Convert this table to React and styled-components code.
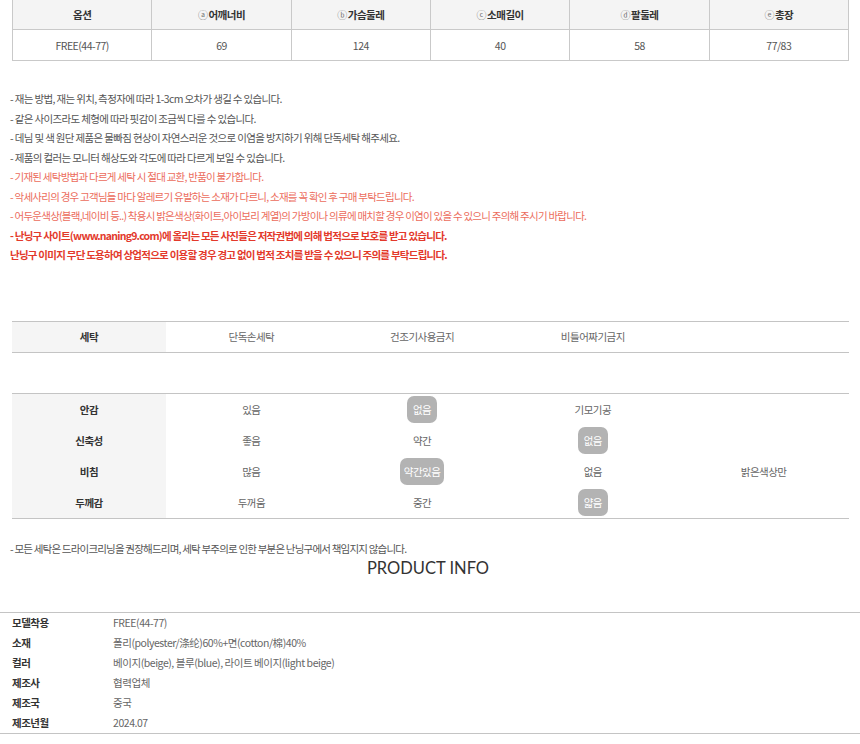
import React from 'react';
import styled, { createGlobalStyle } from 'styled-components';

const GlobalStyle = createGlobalStyle`
  body {
    margin: 0;
    background: #fff;
    font-family: "Noto Sans CJK KR", "Noto Sans CJK SC", sans-serif;
    font-size: 10.5px;
    letter-spacing: -0.5px;
    color: #555;
  }
`;

const sizeHead = [
  { mark: '', label: '옵션' },
  { mark: 'ⓐ', label: '어깨너비' },
  { mark: 'ⓑ', label: '가슴둘레' },
  { mark: 'ⓒ', label: '소매길이' },
  { mark: 'ⓓ', label: '팔둘레' },
  { mark: 'ⓔ', label: '총장' },
];
const sizeRow = ['FREE(44-77)', '69', '124', '40', '58', '77/83'];

const notes = [
  { tone: 'gray', text: '- 재는 방법, 재는 위치, 측정자에 따라 1-3cm 오차가 생길 수 있습니다.' },
  { tone: 'gray', text: '- 같은 사이즈라도 체형에 따라 핏감이 조금씩 다를 수 있습니다.' },
  { tone: 'gray', text: '- 데님 및 색 원단 제품은 물빠짐 현상이 자연스러운 것으로 이염을 방지하기 위해 단독세탁 해주세요.' },
  { tone: 'gray', text: '- 제품의 컬러는 모니터 해상도와 각도에 따라 다르게 보일 수 있습니다.' },
  { tone: 'light', text: '- 기재된 세탁방법과 다르게 세탁 시 절대 교환, 반품이 불가합니다.' },
  { tone: 'light', text: '- 악세사리의 경우 고객님들 마다 알레르기 유발하는 소재가 다르니, 소재를 꼭 확인 후 구매 부탁드립니다.' },
  { tone: 'light', text: '- 어두운색상(블랙,네이비 등..) 착용시 밝은색상(화이트,아이보리 계열)의 가방이나 의류에 매치할 경우 이염이 있을 수 있으니 주의해 주시기 바랍니다.' },
  { tone: 'strong', text: '- 난닝구 사이트(www.naning9.com)에 올리는 모든 사진들은 저작권법에 의해 법적으로 보호를 받고 있습니다.' },
  { tone: 'strong', text: '난닝구 이미지 무단 도용하여 상업적으로 이용할 경우 경고 없이 법적 조치를 받을 수 있으니 주의를 부탁드립니다.' },
];

const feel = [
  { label: '안감', values: ['있음', '없음', '기모기공', ''], on: 1 },
  { label: '신축성', values: ['좋음', '약간', '없음', ''], on: 2 },
  { label: '비침', values: ['많음', '약간있음', '없음', '밝은색상만'], on: 1 },
  { label: '두께감', values: ['두꺼움', '중간', '얇음', ''], on: 2 },
];

const info = [
  ['모델착용', 'FREE(44-77)'],
  ['소재', '폴리(polyester/涤纶)60%+면(cotton/棉)40%'],
  ['컬러', '베이지(beige), 블루(blue), 라이트 베이지(light beige)'],
  ['제조사', '협력업체'],
  ['제조국', '중국'],
  ['제조년월', '2024.07'],
];

const toneColor = { gray: '#555', light: '#ec6c5c', strong: '#e3392b' };
const toneSpacing = { gray: '-0.65px', light: '-0.75px', strong: '-0.75px' };

const Page = styled.div`
  width: 860px;
  display: flex;
  flex-direction: column;
`;

const SizeTable = styled.div`
  margin: 0 11px 0 12px;
  display: grid;
  grid-template-columns: repeat(6, 1fr);
  border-left: 1px solid #c9c9c9;
`;

const SizeCell = styled.div`
  height: ${({ head }) => (head ? '29px' : '30px')};
  display: flex;
  align-items: center;
  justify-content: center;
  background: ${({ head }) => (head ? '#f4f4f4' : '#fff')};
  border-right: 1px solid #c9c9c9;
  border-bottom: 1px solid #c9c9c9;
  color: ${({ head }) => (head ? '#333' : '#555')};
  font-weight: ${({ head }) => (head ? 700 : 400)};
`;

const Mark = styled.span`
  font-size: 10px;
  font-weight: 400;
  color: #777;
  margin-right: 1px;
`;

const Notes = styled.ul`
  list-style: none;
  margin: 28px 0 0;
  padding: 0 0 0 10px;
`;

const Note = styled.li`
  line-height: 19.5px;
  white-space: nowrap;
  letter-spacing: ${({ tone }) => toneSpacing[tone]};
  color: ${({ tone }) => toneColor[tone]};
  font-weight: ${({ tone }) => (tone === 'strong' ? 700 : 400)};
`;

const Grid = styled.div`
  margin: ${({ top }) => top}px 11px 0 12px;
  display: grid;
  grid-template-columns: 154px repeat(4, 1fr);
  border-top: 1px solid #c4c4c4;
  border-bottom: 1px solid #c4c4c4;
`;

const Label = styled.div`
  height: ${({ h }) => h}px;
  display: flex;
  align-items: center;
  justify-content: center;
  background: #f5f5f5;
  font-weight: 700;
  color: #333;
`;

const Value = styled.div`
  height: ${({ h }) => h}px;
  display: flex;
  align-items: center;
  justify-content: center;
  color: #666;
`;

const Badge = styled.span`
  display: inline-flex;
  align-items: center;
  justify-content: center;
  height: 27px;
  padding: 0 4px;
  min-width: 22px;
  border-radius: 7px;
  background: #b3b3b3;
  color: #fff;
`;

const Footnote = styled.p`
  margin: 20px 0 0;
  padding-left: 10px;
  line-height: 19.5px;
  letter-spacing: -0.8px;
`;

const Heading = styled.h2`
  margin: 0;
  text-align: center;
  font-family: Lato, "Open Sans", sans-serif;
  font-weight: 400;
  font-size: 16.5px;
  letter-spacing: 0;
  line-height: 20px;
  color: #333;
  padding-right: 4px;
`;

const InfoTable = styled.div`
  margin-top: 34px;
  display: grid;
  grid-template-columns: 101px 1fr;
  padding: 0 12px;
  border-top: 1px solid #c4c4c4;
  border-bottom: 1px solid #c4c4c4;
  line-height: 20px;
`;

const InfoKey = styled.div`
  font-weight: 700;
  color: #333;
`;

const InfoValue = styled.div`
  color: #666;
  letter-spacing: -0.45px;
`;

export default function App() {
  return (
    <Page>
      <GlobalStyle />
      <SizeTable>
        {sizeHead.map((h) => (
          <SizeCell head key={h.label}>
            {h.mark && <Mark>{h.mark}</Mark>}
            {h.label}
          </SizeCell>
        ))}
        {sizeRow.map((v, i) => (
          <SizeCell key={i}>{v}</SizeCell>
        ))}
      </SizeTable>

      <Notes>
        {notes.map((n, i) => (
          <Note key={i} tone={n.tone}>{n.text}</Note>
        ))}
      </Notes>

      <Grid top={56}>
        <Label h={30}>세탁</Label>
        <Value h={30}>단독손세탁</Value>
        <Value h={30}>건조기사용금지</Value>
        <Value h={30}>비틀어짜기금지</Value>
        <Value h={30} />
      </Grid>

      <Grid top={40}>
        {feel.map((row) => (
          <React.Fragment key={row.label}>
            <Label h={31}>{row.label}</Label>
            {row.values.map((v, i) => (
              <Value h={31} key={i}>
                {i === row.on ? <Badge>{v}</Badge> : v}
              </Value>
            ))}
          </React.Fragment>
        ))}
      </Grid>

      <Footnote>- 모든 세탁은 드라이크리닝을 권장해드리며, 세탁 부주의로 인한 부분은 난닝구에서 책임지지 않습니다.</Footnote>
      <Heading>PRODUCT INFO</Heading>

      <InfoTable>
        {info.map(([k, v]) => (
          <React.Fragment key={k}>
            <InfoKey>{k}</InfoKey>
            <InfoValue>{v}</InfoValue>
          </React.Fragment>
        ))}
      </InfoTable>
    </Page>
  );
}
